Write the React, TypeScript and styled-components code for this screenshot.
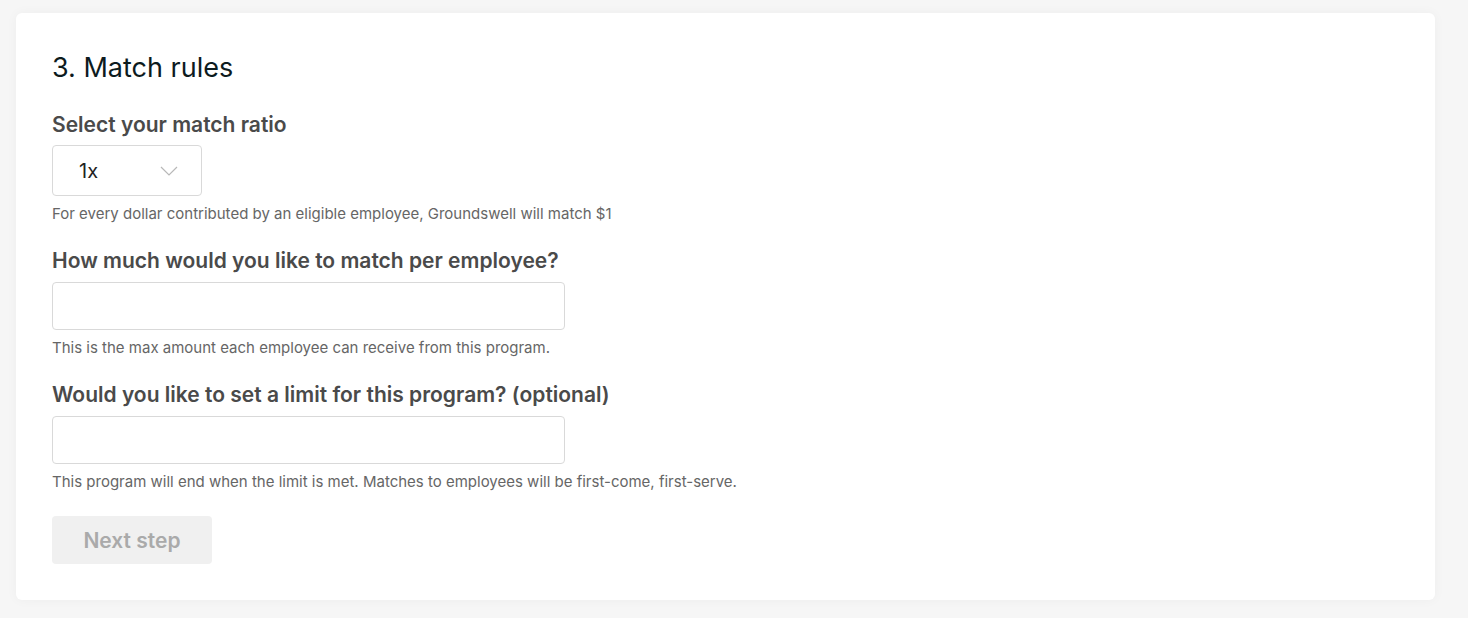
import React from 'react';
import styled, { createGlobalStyle } from 'styled-components';

const GlobalStyle = createGlobalStyle`
    body {
        margin: 0;
        background: #f6f6f6;
        font-family: Inter, "Noto Sans", sans-serif;
    }
`;

const Page = styled.div`
    padding: 13px 33px 18px 16px;
    height: 618px;
    box-sizing: border-box;
`;

const Card = styled.div`
    background: #fff;
    border-radius: 6px;
    box-shadow: 0 0 12px rgba(0, 0, 0, 0.04);
    padding: 38px 36px 36px;
    display: flex;
    flex-direction: column;
    align-items: flex-start;
`;

const Title = styled.h2`
    margin: 0;
    font-size: 27px;
    line-height: 34px;
    font-weight: 400;
    color: #0d1b1e;
`;

const Label = styled.label<{ $top: number }>`
    margin-top: ${(p) => p.$top}px;
    font-size: 21px;
    line-height: 28px;
    font-weight: 600;
    color: #4a4a4a;
`;

const SelectBox = styled.div`
    margin-top: 6px;
    width: 150px;
    height: 51px;
    box-sizing: border-box;
    border: 1px solid #d9d9d9;
    border-radius: 4px;
    display: flex;
    align-items: center;
    justify-content: space-between;
    padding: 0 23px 0 26px;
    font-size: 20px;
    color: #222;
`;

const TextInput = styled.input`
    margin-top: 7px;
    width: 513px;
    height: 48px;
    box-sizing: border-box;
    border: 1px solid #d9d9d9;
    border-radius: 4px;
    font-family: inherit;
    font-size: 16px;
    padding: 0 14px;
    outline: none;
`;

const Help = styled.p<{ $top: number }>`
    margin: ${(p) => p.$top}px 0 0;
    font-size: 15px;
    line-height: 20px;
    color: #666;
`;

const NextButton = styled.button`
    margin-top: 24px;
    width: 160px;
    height: 48px;
    border: none;
    border-radius: 4px;
    background: #f0f0f0;
    color: #aaa;
    font-family: inherit;
    font-size: 21px;
    font-weight: 600;
    cursor: not-allowed;
`;

const Chevron = () => (
    <svg width="18" height="10" viewBox="0 0 18 10" fill="none">
        <path d="M1 1l8 8 8-8" stroke="#b8b8b8" strokeWidth="1.2" />
    </svg>
);

const App: React.FC = () => (
    <>
        <GlobalStyle />
        <Page>
            <Card>
                <Title>3. Match rules</Title>

                <Label $top={26}>Select your match ratio</Label>
                <SelectBox>
                    <span>1x</span>
                    <Chevron />
                </SelectBox>
                <Help $top={8}>For every dollar contributed by an eligible employee, Groundswell will match $1</Help>

                <Label $top={23}>How much would you like to match per employee?</Label>
                <TextInput />
                <Help $top={8}>This is the max amount each employee can receive from this program.</Help>

                <Label $top={23}>Would you like to set a limit for this program? (optional)</Label>
                <TextInput />
                <Help $top={8}>This program will end when the limit is met. Matches to employees will be first-come, first-serve.</Help>

                <NextButton disabled>Next step</NextButton>
            </Card>
        </Page>
    </>
);

export default App;
